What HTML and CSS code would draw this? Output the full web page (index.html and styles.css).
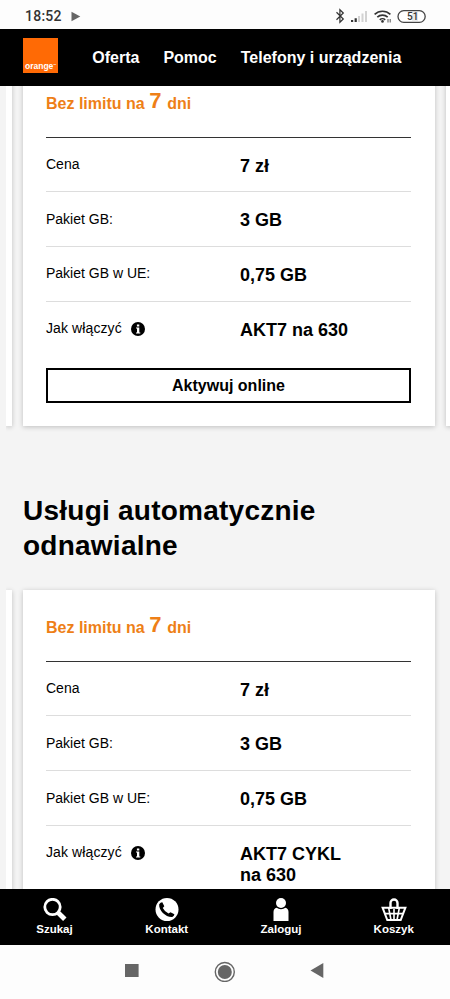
FILE: index.html
```html
<!DOCTYPE html>
<html lang="pl">
<head>
<meta charset="utf-8">
<title>Orange</title>
<link rel="stylesheet" href="styles.css">
</head>
<body>
<div class="statusbar">
  <span class="clock">18:52</span>
  <svg class="play" width="10" height="11" viewBox="0 0 10 11"><path d="M.5.7 9.3 5.5.5 10.3z" fill="#666"/></svg>
  <svg class="indicators" width="92" height="16" viewBox="0 0 92 16">
    <path d="M1.5 4.300 8.300 11 4.900 14.300V1.700L8.300 5 1.500 11.700" fill="none" stroke="#333" stroke-width="1.200"/>
    <g fill="#333"><path d="M16 12h2.200v2H16zM19.600 10.200h2.200V14h-2.200z"/></g>
    <g fill="#d2d2d2"><path d="M23 8h2v6h-2zM26.500 5.500h2V14h-2zM30 3h2v11h-2z"/></g>
    <g fill="none" stroke="#333" stroke-width="1.600">
      <path d="M39.600 6.400a11.500 11.500 0 0 1 15.800 0M42.300 9.200a7.600 7.600 0 0 1 10.400 0M44.800 11.800a3.900 3.900 0 0 1 5.400 0"/>
    </g>
    <circle cx="47.500" cy="13.400" r="1.300" fill="#333"/>
    <path d="M53 11v3.500M55.200 11v3.500" stroke="#555" stroke-width="1"/>
    <rect x="63" y="2.700" width="27.200" height="11.600" rx="5.800" fill="#fff" stroke="#444" stroke-width="1.300"/>
    <path d="M77 4.200h6v8.600h-6z" fill="#e8e8e8"/>
    <text class="battery" x="72" y="12">51</text>
  </svg>
</div>
<header class="topbar">
  <div class="logo"><span>orange</span><sup>™</sup></div>
  <nav class="menu"><a>Oferta</a><a>Pomoc</a><a>Telefony i urządzenia</a></nav>
</header>
<main class="page">
  <section class="carousel carousel-first">
    <div class="card peek"></div>
    <article class="card offer">
      <h3 class="title">Bez limitu na <b>7</b> dni</h3>
      <dl class="row"><dt>Cena</dt><dd>7 zł</dd></dl>
      <dl class="row"><dt>Pakiet GB:</dt><dd>3 GB</dd></dl>
      <dl class="row"><dt>Pakiet GB w UE:</dt><dd>0,75 GB</dd></dl>
      <dl class="row"><dt><span class="how">Jak włączyć</span> <svg class="info" width="14" height="14" viewBox="0 0 14 14"><circle cx="7" cy="7" r="7"/><path d="M5 5.600h3.300v4.800h1v1H5v-1h1V6.600H5zM5.900 2.400h2.400v2H5.900z" fill="#fff"/></svg></dt><dd>AKT7 na 630</dd></dl>
      <button class="activate">Aktywuj online</button>
    </article>
    <div class="card next"></div>
  </section>
  <h2 class="heading">Usługi automatycznie odnawialne</h2>
  <section class="carousel">
    <div class="card peek"></div>
    <article class="card offer">
      <h3 class="title">Bez limitu na <b>7</b> dni</h3>
      <dl class="row"><dt>Cena</dt><dd>7 zł</dd></dl>
      <dl class="row"><dt>Pakiet GB:</dt><dd>3 GB</dd></dl>
      <dl class="row"><dt>Pakiet GB w UE:</dt><dd>0,75 GB</dd></dl>
      <dl class="row"><dt><span class="how">Jak włączyć</span> <svg class="info" width="14" height="14" viewBox="0 0 14 14"><circle cx="7" cy="7" r="7"/><path d="M5 5.600h3.300v4.800h1v1H5v-1h1V6.600H5zM5.900 2.400h2.400v2H5.900z" fill="#fff"/></svg></dt><dd>AKT7 CYKL<br>na 630</dd></dl>
    </article>
  </section>
</main>
<nav class="tabs">
  <a class="tab">
    <svg width="26" height="24" viewBox="0 0 26 24"><circle cx="10.500" cy="9" r="7.700" fill="none" stroke="#fff" stroke-width="2.800"/><path d="m16 14.500 6.800 6.800" stroke="#fff" stroke-width="4.800"/></svg>
    <span>Szukaj</span>
  </a>
  <a class="tab">
    <svg width="24" height="24" viewBox="0 0 24 24"><circle cx="12" cy="11.500" r="11.500" fill="#fff"/><path d="M4.200 6.200Q5.500 4.200 7.300 4.300L9.300 8.300 7.800 10Q9.500 13.500 13.500 15.500L15.500 14.200 19.400 16.200Q19.300 18 17.300 19C11 19.500 3.500 12.500 4.200 6.200Z"/></svg>
    <span>Kontakt</span>
  </a>
  <a class="tab">
    <svg width="24" height="24" viewBox="0 0 24 24"><circle cx="12" cy="5" r="5" fill="#fff"/><path d="M4.500 23V14q0-3.500 3.200-4.200 1.600 1.400 4.300 1.400t4.300-1.400q3.200.7 3.200 4.200v9z" fill="#fff"/></svg>
    <span>Zaloguj</span>
  </a>
  <a class="tab">
    <svg width="26" height="24" viewBox="0 0 26 24"><g fill="none" stroke="#fff" stroke-width="1.600"><path d="M9.500 11V5a3.500 3.500 0 0 1 7 0v6" stroke-width="2.400"/><path d="M1.600 9.700h22.800L19.700 22H6.300z" stroke-width="2"/><path d="M4 15.600h18M7.700 10l2.300 12M13 11v11M18.300 10 16 22"/></g></svg>
    <span>Koszyk</span>
  </a>
</nav>
<footer class="sysnav">
  <svg width="202" height="24" viewBox="0 0 202 24" fill="#666">
    <path d="M1 6h13.600v13H1z"/>
    <circle cx="100.800" cy="14" r="9.500" fill="none" stroke="#666" stroke-width="1.400"/><circle cx="100.800" cy="14" r="7"/>
    <path d="M186.500 12.500 199.300 5v15z"/>
  </svg>
</footer>
</body>
</html>
```
FILE: styles.css
```css
* { box-sizing: border-box; }
body {
  margin: 0;
  height: 999px;
  display: flex;
  flex-direction: column;
  overflow: hidden;
  background: #fdfdfd;
  color: #000;
  font-family: "Liberation Sans", Arial, sans-serif;
}
h2, h3, dl, dt, dd { margin: 0; }

.statusbar {
  flex: none;
  height: 29px;
  display: flex;
  align-items: center;
  padding: 3px 23.5px 0 25px;
}
.clock {
  font: 500 14px/16px Roboto, sans-serif;
  letter-spacing: .25px;
  color: #333;
}
.play { margin-left: 9px; }
.indicators { margin-left: auto; }
.battery { font: 500 10px Roboto, sans-serif; fill: #333; }

.topbar {
  flex: none;
  height: 57px;
  display: flex;
  align-items: center;
  background: #000;
  padding: 0 23px 4px;
}
.logo {
  width: 35px;
  height: 35px;
  display: flex;
  align-items: flex-end;
  padding: 0 0 2px 2px;
  background: #ff6a05;
  color: #fff;
  font-size: 8.5px;
  font-weight: bold;
  line-height: 9px;
}
.logo sup { font-size: 3px; line-height: 12px; }
.menu {
  display: flex;
  gap: 24px;
  margin: 5px 0 0 34.3px;
  color: #fff;
  font-size: 16px;
  font-weight: bold;
  white-space: nowrap;
}

.page {
  flex: 1;
  min-height: 0;
  overflow: hidden;
  display: flex;
  flex-direction: column;
  background: #f4f4f4;
}
.carousel {
  flex: none;
  display: flex;
  gap: 11px;
  margin-left: 6px;
  padding: 10px 0;
  overflow: hidden;
}
.carousel-first { margin-top: -30px; }
.card {
  flex: none;
  background: #fff;
  box-shadow: 0 1px 5px rgba(0, 0, 0, .22);
}
.peek { width: 6px; }
.next { width: 20px; }
.offer { width: 411.5px; padding: 0 23.5px 23px 23px; }
.title {
  height: 71.5px;
  padding-top: 24.7px;
  border-bottom: 1px solid #333;
  color: #ee7f17;
  font-size: 16px;
  line-height: 26px;
}
.title b { font-size: 22px; line-height: 20px; vertical-align: 1px; margin-right: 1.5px; }
.row {
  display: grid;
  grid-template-columns: 194px 1fr;
  min-height: 54.7px;
  padding-top: 18px;
  border-bottom: 1px solid #ddd;
}
.row:last-of-type { border-bottom: 0; }
.row dt {
  display: flex;
  align-items: center;
  height: 17px;
  font-size: 14px;
  line-height: 18px;
}
.row dd { font-size: 18px; font-weight: bold; line-height: 20.8px; }
.how { letter-spacing: .1px; }
.info { margin: 2px 0 0 9.5px; }
.activate {
  display: block;
  width: 100%;
  height: 35px;
  margin-top: 12px;
  padding: 0;
  border: 2px solid #000;
  background: #fff;
  color: #000;
  font: bold 16px/30px "Liberation Sans", Arial, sans-serif;
}
.heading {
  flex: none;
  width: 400px;
  margin: 57px 0 17px 23px;
  font-size: 28px;
  line-height: 35px;
  letter-spacing: .24px;
}

.tabs {
  flex: none;
  height: 56px;
  display: grid;
  grid-template-columns: 109px 115.5px 113px 112.5px;
  padding-top: 9px;
  background: #000;
  color: #fff;
  font-size: 11.5px;
  font-weight: bold;
}
.tab { display: flex; flex-direction: column; align-items: center; }
.tab span { line-height: 14px; }
.sysnav { flex: none; height: 54px; padding: 13px 0 0 124px; }
.sysnav svg { display: block; }
```
